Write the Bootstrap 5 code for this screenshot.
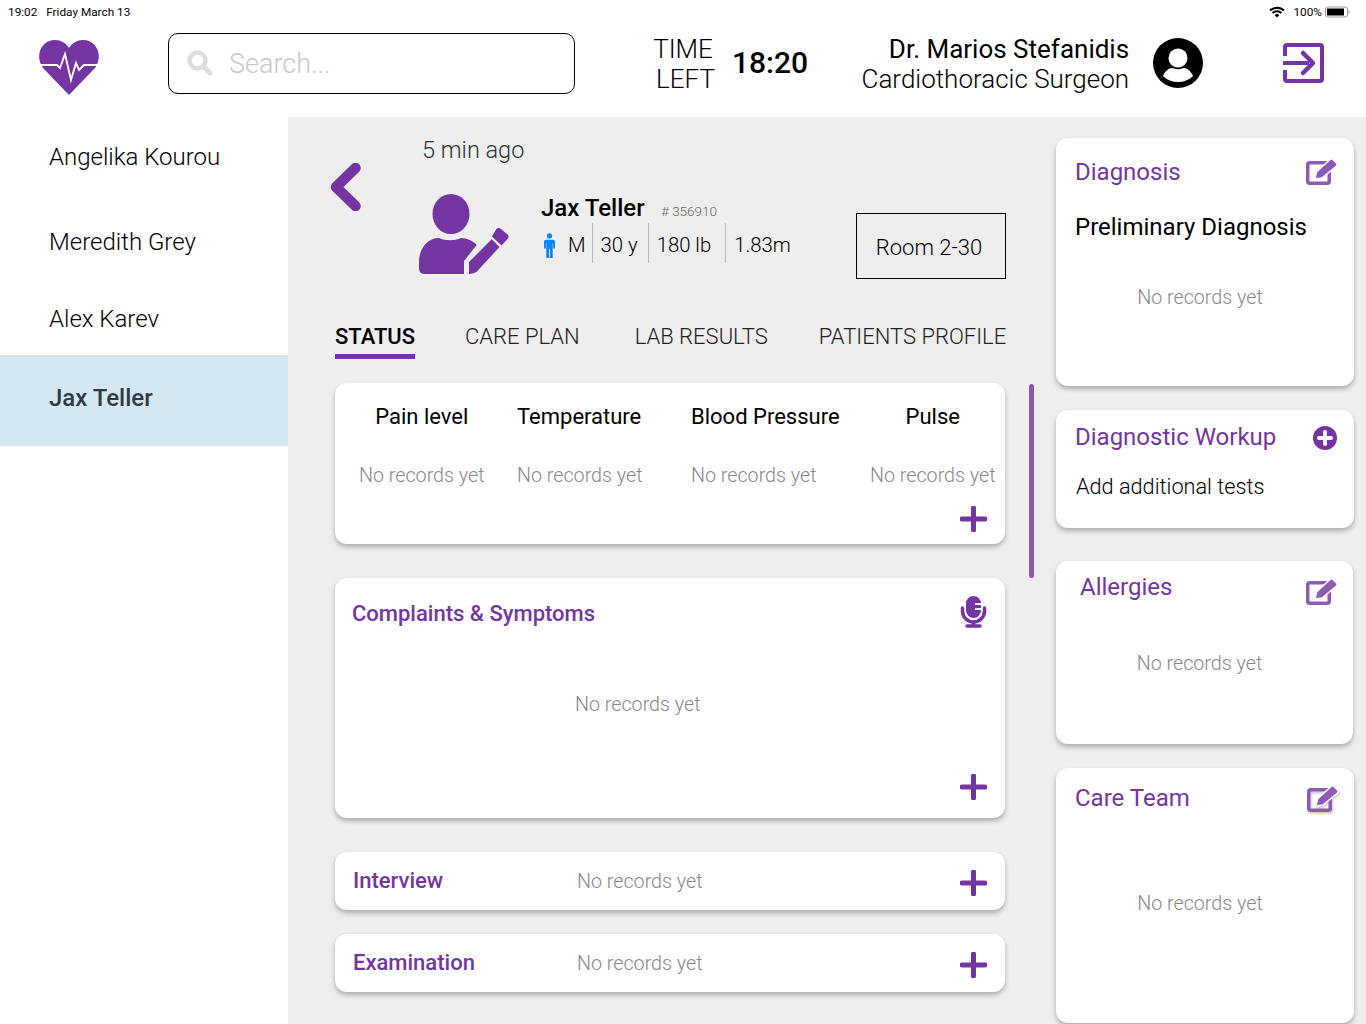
<!DOCTYPE html>
<html lang="en">
<head>
    <meta charset="UTF-8">
    <meta name="viewport" content="width=device-width, initial-scale=1">
    <title>Patient status</title>
    <link href="https://cdn.jsdelivr.net/npm/bootstrap@5.3.0/dist/css/bootstrap.min.css" rel="stylesheet">
    <style>
        html, body { height: 1024px; overflow: hidden; }
        body { font-family: Roboto, "Liberation Sans", sans-serif; color: #000; background: #fff; }
        .ink { fill: #7435a3; }
        .status-bar { height: 22px; padding: 4px 16px 0 8px; font-size: 11.800px; line-height: 16px; }
        .status-right { margin-top: -2px; }
        .status-pct { margin: 0 3px 0 8px; }
        .top-bar { height: 95px; }
        .logo-cell { width: 168px; padding-left: 39px; padding-bottom: 5px; }
        .search-box { width: 407px; height: 61px; margin-top: -13px; border: 1px solid #000; border-radius: 10px; padding-left: 18px; font-size: 27px; font-weight: 300; color: #c8c8c8; gap: 16px; }
        .search-box span { padding-top: 2px; }
        .time-label { width: 66px; margin-left: 75px; margin-top: -11px; font-size: 26px; font-weight: 300; line-height: 30px; text-align: center; }
        .time-left { margin-left: 5px; }
        .time-value { margin-left: 16px; margin-top: -15px; font-size: 30px; font-weight: 500; }
        .doctor { width: 321px; margin-top: -11px; font-size: 26px; line-height: 30px; text-align: right; }
        .doctor .role { font-weight: 300; }
        .doctor-pic { margin-left: 24px; margin-top: -13px; }
        .exit-pic { margin-left: 80px; margin-top: -13px; }
        .page-body { height: 907px; }
        .side-list { width: 288px; flex-shrink: 0; font-size: 24px; font-weight: 300; }
        .side-list div { padding-left: 49px; display: flex; align-items: center; }
        .side-list .active-row { background: #d5e8f2; font-weight: 500; color: #2f3b44; height: 91px; padding-bottom: 5px; }
        .work-area { background: #eee; position: relative; }
        .center-col { width: 768px; padding-left: 47px; flex-shrink: 0; }
        .right-col { width: 298px; padding-top: 21px; }
        .ago { margin-left: 87px; padding-top: 16px; font-size: 23.500px; font-weight: 300; line-height: 34px; color: #333; height: 50px; }
        .patient-row { height: 152px; position: relative; }
        .back-pic { margin-left: -5px; margin-top: -4px; }
        .patient-pic { margin-left: 57px; margin-top: 27px; }
        .patient-info { margin-left: 31px; margin-top: 26px; }
        .patient-name { font-size: 24px; font-weight: 500; line-height: 30px; }
        .patient-id { font-size: 13.500px; font-weight: 300; color: #666; margin-left: 13px; }
        .patient-facts { font-size: 20.300px; font-weight: 300; height: 40px; margin-top: -3px; }
        .man-pic { margin-left: 3px; margin-top: 5px; }
        .patient-facts span { padding: 2px 10px 0 8px; border-left: 1px solid #bbb; line-height: 40px; height: 40px; }
        .patient-facts .fact-m { border-left: 0; padding: 2px 6px 0 13px; }
        .patient-facts .fact-w { padding-right: 14px; }
        .room-box { position: absolute; left: 521px; top: 46px; width: 150px; height: 66px; padding: 3px 4px 0 0; border: 1px solid #000; font-size: 22px; font-weight: 300; }
        .tab-row { width: 670px; height: 64px; font-size: 22px; font-weight: 300; padding-top: 1px; white-space: nowrap; }
        .tab-row div { height: 39px; padding-top: 1px; line-height: 32px; color: #222; }
        .tab-row .tab-on { font-weight: 500; color: #000; border-bottom: 5px solid #7435a3; }
        .soft-card { background: #fff; border-radius: 12px; box-shadow: 0 3px 5px rgba(0,0,0,.28); position: relative; }
        .none-text { font-size: 19.700px; font-weight: 300; color: #888; white-space: nowrap; }
        .vitals { width: 670px; height: 161px; }
        .vital { position: absolute; top: 19px; }
        .vital b { display: block; font-size: 22px; font-weight: 400; line-height: 30px; }
        .vital .none-text { display: block; margin-top: 29px; line-height: 30px; }
        .plus-pic { position: absolute; right: 18px; }
        .complaints { width: 670px; height: 240px; margin-top: 34px; }
        .purple-title { color: #7435a3; font-size: 22px; font-weight: 500; }
        .bar-card { width: 670px; height: 58px; padding: 0 0 2px 18px; }
        .bar-card .none-text { position: absolute; left: 242px; top: 15px; line-height: 30px; }
        .bar-card .plus-pic { top: 18px; }
        .side-card { width: 298px; padding: 19px 19px 0; }
        .side-title { color: #7435a3; font-size: 24px; font-weight: 400; line-height: 30px; }
        .edit-pic { position: absolute; right: 16px; top: 20px; }
        .allergy-edit { right: 15px; top: 17px; }
        .care-edit { right: 15px; top: 17px; filter: drop-shadow(1px 2px 1px rgba(0,0,0,.2)); }
        .scroll-thumb { position: absolute; left: 741px; top: 267px; width: 5px; height: 194px; border-radius: 3px; background: #8a57b3; }
    </style>
</head>
<body>

    <!-- status bar -->
    <div class="status-bar d-flex justify-content-between">
        <div>19:02 &nbsp;&nbsp;Friday March 13</div>
        <div class="status-right d-flex align-items-center">
            <svg width="16" height="12" viewBox="0 0 16 12"><path d="M1 4.500a10 10 0 0 1 14 0M3.500 7a6.500 6.500 0 0 1 9 0" fill="none" stroke="#000" stroke-width="2"/><path d="M5.600 9.100a3.400 3.400 0 0 1 4.800 0L8 11.500z"/></svg>
            <span class="status-pct">100%</span>
            <svg width="25" height="12" viewBox="0 0 25 12"><rect x=".5" y="1" width="22" height="10" rx="2" fill="#fff" stroke="#999"/><rect x="2" y="2.500" width="17" height="7"/><rect x="23.500" y="4.500" width="1" height="3" fill="#999"/></svg>
        </div>
    </div>

    <!-- header -->
    <div class="top-bar d-flex align-items-center">
        <div class="logo-cell">
            <svg width="60" height="55" viewBox="0 0 60 55">
                <path class="ink" d="M30 55 4 28C-5 15 3 0 16 0c6 0 11 3 14 8 3-5 8-8 14-8 13 0 21 15 12 28z"/>
                <path d="M0 25h18l3 3 5-14 6 26 5-17 3 7 3-3 2-2h15" fill="none" stroke="#fff" stroke-width="1.800"/>
            </svg>
        </div>
        <div class="search-box d-flex align-items-center">
            <svg width="26" height="26" viewBox="0 0 26 26"><circle cx="10.500" cy="10.500" r="8" fill="none" stroke="#dedede" stroke-width="4.500"/><path d="m16.500 16.500 6.500 6.500" stroke="#dedede" stroke-width="5" stroke-linecap="round"/></svg>
            <span>Search...</span>
        </div>
        <div class="time-label">TIME<br><span class="time-left">LEFT</span></div>
        <div class="time-value">18:20</div>
        <div class="doctor">Dr. Marios Stefanidis<br><span class="role">Cardiothoracic Surgeon</span></div>
        <svg class="doctor-pic" width="50" height="50" viewBox="0 0 50 50">
            <circle cx="25" cy="25" r="25"/>
            <circle cx="25" cy="20" r="9.500" fill="#fff"/>
            <path d="M10 38c2-5 6-8 9-8 4 1.500 8 1.500 12 0 3 0 7 3 9 8-8 8-22 8-30 0z" fill="#fff"/>
        </svg>
        <svg class="exit-pic" width="41" height="40" viewBox="0 0 41 40">
            <path d="M2 13V4q0-2 2-2h33q2 0 2 2v32q0 2-2 2H4q-2 0-2-2v-9" fill="none" stroke="#7435a3" stroke-width="4"/>
            <path d="M0 18h26v4H0z" class="ink"/>
            <path d="m20 10 10 10-10 10" fill="none" stroke="#7435a3" stroke-width="4.500" stroke-linecap="round" stroke-linejoin="round"/>
        </svg>
    </div>

    <div class="page-body d-flex">
        <!-- patient list -->
        <div class="side-list">
            <div style="height: 80px">Angelika Kourou</div>
            <div style="height: 90px">Meredith Grey</div>
            <div style="height: 64px; margin-bottom: 4px">Alex Karev</div>
            <div class="active-row">Jax Teller</div>
        </div>

        <div class="work-area flex-grow-1 d-flex">
            <div class="center-col">
                <div class="ago">5 min ago</div>
                <div class="patient-row d-flex align-items-start">
                    <svg class="back-pic" width="32" height="48" viewBox="0 0 32 48"><path d="M25.500 5 6 24l19.500 19" fill="none" stroke="#7435a3" stroke-width="10.500" stroke-linecap="round" stroke-linejoin="round"/></svg>
                    <svg class="patient-pic" width="91" height="80" viewBox="0 0 91 80">
                        <ellipse class="ink" cx="32" cy="20" rx="18.500" ry="20"/>
                        <path class="ink" d="M0 74v-6C0 55 8 44 20 44c6 3 16 3 22 0 6 0 12 3 15.700 7L45 67v13H6q-6 0-6-6z"/>
                        <path class="ink" d="m50 68 22.700-22.700 7.800 7.700-22.800 24.700Q55 79.500 50 80zM77 35.500q2.500-2.500 5-.5l6.500 5.500q2 2 0 4.500l-6 6.500-9.500-9z"/>
                    </svg>
                    <div class="patient-info">
                        <div class="patient-name">Jax Teller<span class="patient-id"> # 356910</span></div>
                        <div class="patient-facts d-flex align-items-center">
                            <svg class="man-pic" width="11" height="25" viewBox="0 0 12 26" preserveAspectRatio="none" fill="#0a84ff"><circle cx="6" cy="3" r="2.800"/><path d="M2 7h8q2 0 2 2v7h-2v-5H9.500v15H6.500v-9h-1v9h-3V11H2v5H0V9q0-2 2-2z"/></svg>
                            <span class="fact-m">M</span>
                            <span>30 y</span>
                            <span class="fact-w">180 lb</span>
                            <span>1.83m</span>
                        </div>
                    </div>
                    <div class="room-box d-flex align-items-center justify-content-center">Room 2-30</div>
                </div>
                <div class="tab-row d-flex">
                    <div class="tab-on">STATUS</div>
                    <div style="margin-left: 50px">CARE PLAN</div>
                    <div style="margin-left: 55px">LAB RESULTS</div>
                    <div style="margin-left: 51px">PATIENTS PROFILE</div>
                </div>

                <div class="soft-card vitals">
                    <div class="vital text-center" style="left: 24px"><b>Pain level</b><span class="none-text">No records yet</span></div>
                    <div class="vital" style="left: 182px"><b>Temperature</b><span class="none-text">No records yet</span></div>
                    <div class="vital" style="left: 356px"><b>Blood Pressure</b><span class="none-text">No records yet</span></div>
                    <div class="vital text-center" style="left: 535px"><b>Pulse</b><span class="none-text">No records yet</span></div>
                    <svg class="plus-pic" style="bottom: 12px" width="27" height="26" viewBox="0 0 27 26"><path d="M13.500 2v22M2 13h23" stroke="#7435a3" stroke-width="5" stroke-linecap="round"/></svg>
                </div>

                <div class="soft-card complaints">
                    <div class="purple-title" style="padding: 19px 0 0 17px">Complaints &amp; Symptoms</div>
                    <svg class="position-absolute" style="right: 18px; top: 18px" width="27" height="32" viewBox="0 0 27 32">
                        <rect class="ink" x="6" y="0" width="15" height="22" rx="7.500"/>
                        <path d="M15 8h6M15 13h6" stroke="#fff" stroke-width="1.800"/>
                        <path d="M2.500 12v3a11 11 0 0 0 22 0v-3" fill="none" stroke="#7435a3" stroke-width="3.500" stroke-linecap="round"/>
                        <path d="M13.500 26v4" stroke="#7435a3" stroke-width="3.500"/><path d="M7 30h13" stroke="#7435a3" stroke-width="3.500" stroke-linecap="round"/>
                    </svg>
                    <div class="none-text position-absolute" style="left: 240px; top: 112px">No records yet</div>
                    <svg class="plus-pic" style="bottom: 18px" width="27" height="26" viewBox="0 0 27 26"><path d="M13.500 2v22M2 13h23" stroke="#7435a3" stroke-width="5" stroke-linecap="round"/></svg>
                </div>

                <div class="soft-card bar-card d-flex align-items-center" style="margin-top: 34px">
                    <div class="purple-title">Interview</div>
                    <div class="none-text">No records yet</div>
                    <svg class="plus-pic" width="27" height="26" viewBox="0 0 27 26"><path d="M13.500 2v22M2 13h23" stroke="#7435a3" stroke-width="5" stroke-linecap="round"/></svg>
                </div>
                <div class="soft-card bar-card d-flex align-items-center" style="margin-top: 24px">
                    <div class="purple-title">Examination</div>
                    <div class="none-text">No records yet</div>
                    <svg class="plus-pic" width="27" height="26" viewBox="0 0 27 26"><path d="M13.500 2v22M2 13h23" stroke="#7435a3" stroke-width="5" stroke-linecap="round"/></svg>
                </div>
            </div>

            <div class="right-col">
                <div class="soft-card side-card" style="height: 248px">
                    <div class="side-title">Diagnosis</div>
                    <svg class="edit-pic" width="32" height="27" viewBox="0 0 32 27"><rect x="1.750" y="4.750" width="21.500" height="20.500" rx="2" fill="none" stroke="#8d5ab6" stroke-width="3.500"/><path d="m9 21 1.500-7L24 1.500q1.500-1.500 3 0l3.500 3.500q1.500 1.500 0 3L16 20z" fill="#8d5ab6" stroke="#fff" stroke-width="1.500"/></svg>
                    <div style="font-size: 24px; line-height: 30px; margin-top: 25px">Preliminary Diagnosis</div>
                    <div class="none-text text-center" style="margin-top: 41px; padding-right: 30px; padding-left: 20px">No records yet</div>
                </div>
                <div class="soft-card side-card" style="height: 118px; margin-top: 24px">
                    <div class="side-title" style="margin-top: -7px">Diagnostic Workup</div>
                    <svg class="position-absolute" style="right: 17px; top: 16px" width="24" height="24" viewBox="0 0 24 24"><circle class="ink" cx="12" cy="12" r="12"/><path d="M12 6v12M6 12h12" stroke="#fff" stroke-width="4" stroke-linecap="round"/></svg>
                    <div style="font-size: 21.700px; font-weight: 300; line-height: 30px; margin-top: 20px; padding-left: 1px">Add additional tests</div>
                </div>
                <div class="soft-card side-card" style="height: 183px; margin-top: 33px; width: 297px">
                    <div class="side-title" style="padding-left: 5px; margin-top: -8px">Allergies</div>
                    <svg class="edit-pic allergy-edit" width="32" height="27" viewBox="0 0 32 27"><rect x="1.750" y="4.750" width="21.500" height="20.500" rx="2" fill="none" stroke="#8d5ab6" stroke-width="3.500"/><path d="m9 21 1.500-7L24 1.500q1.500-1.500 3 0l3.500 3.500q1.500 1.500 0 3L16 20z" fill="#8d5ab6" stroke="#fff" stroke-width="1.500"/></svg>
                    <div class="none-text text-center" style="margin-top: 47px; padding-right: 30px; padding-left: 20px">No records yet</div>
                </div>
                <div class="soft-card side-card" style="height: 255px; margin-top: 24px">
                    <div class="side-title" style="margin-top: -4px">Care Team</div>
                    <svg class="edit-pic care-edit" width="32" height="27" viewBox="0 0 32 27"><rect x="1.750" y="4.750" width="21.500" height="20.500" rx="2" fill="none" stroke="#8d5ab6" stroke-width="3.500"/><path d="m9 21 1.500-7L24 1.500q1.500-1.500 3 0l3.500 3.500q1.500 1.500 0 3L16 20z" fill="#8d5ab6" stroke="#fff" stroke-width="1.500"/></svg>
                    <div class="none-text text-center" style="margin-top: 76px; padding-right: 30px; padding-left: 20px">No records yet</div>
                </div>
            </div>
            <div class="scroll-thumb"></div>
        </div>
    </div>

    <script src="https://cdn.jsdelivr.net/npm/bootstrap@5.3.0/dist/js/bootstrap.bundle.min.js"></script>
</body>
</html>
